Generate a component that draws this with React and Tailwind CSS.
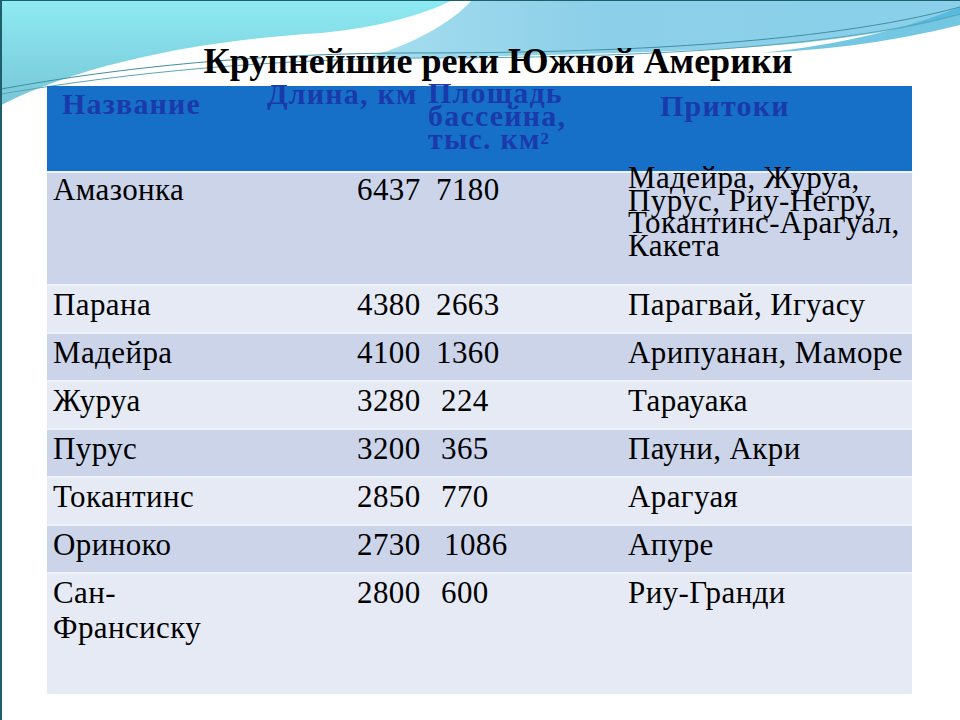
import React from 'react';

function Background() {
  return (
    <svg className="absolute inset-0 w-full h-full" viewBox="0 0 960 720" preserveAspectRatio="none">
      <defs>
        <linearGradient id="cy" x1="0" y1="0" x2="0" y2="1">
          <stop offset="0" stopColor="#8deaf2" />
          <stop offset="1" stopColor="#78c6d8" />
        </linearGradient>
        <linearGradient id="lb" x1="0" y1="0" x2="1" y2="0">
          <stop offset="0" stopColor="#a6def0" />
          <stop offset="0.4" stopColor="#8ccfe8" />
          <stop offset="1" stopColor="#8ad0ea" />
        </linearGradient>
      </defs>
      <path d="M0,0 H450 C420,14 380,26 320,32 C220,38 90,58 0,104 Z" fill="url(#cy)" />
      <path d="M470,0 H960 V14 C900,30 820,44 700,49 C600,53 480,56 360,58 C410,45 450,22 470,0 Z" fill="url(#lb)" />
      <path d="M960,6 C905,28 840,44 760,52 C850,48 910,36 960,24 Z" fill="#45b4d8" opacity="0.75" />
      <path d="M0,88 C120,66 260,52 420,52 C600,52 820,44 960,6" fill="none" stroke="#3f8fa0" strokeWidth="1" />
      <path d="M0,93 C130,71 270,58 430,57 C610,57 830,49 960,13" fill="none" stroke="#5aa6b4" strokeWidth="1" />
    </svg>
  );
}

function Row({ bg, h, name, len, area, areaCls, trib, tribCls, colCls }) {
  return (
    <div className={`grid grid-cols-[304px_79px_192px_1fr] border-t-2 border-[#eef1f8] ${bg} ${h}`}>
      <div className={`pl-[6px] ${colCls}`}>
        {name.map((n) => (
          <div key={n} className="whitespace-nowrap">{n}</div>
        ))}
      </div>
      <div className={`pl-[6px] ${colCls}`}>{len}</div>
      <div className={`${areaCls} ${colCls}`}>{area}</div>
      <div className={`pl-[6px] ${tribCls}`}>
        {trib.map((t) => (
          <div key={t} className="whitespace-nowrap">{t}</div>
        ))}
      </div>
    </div>
  );
}

export default function App() {
  const dark = 'bg-[#ccd4ea]';
  const light = 'bg-[#e6eaf5]';
  return (
    <div className="relative w-[960px] h-[720px] overflow-hidden bg-white border-l-2 border-t border-[#1f5f6c]">
      <Background />
      <div className="relative flex flex-col">
        <div className="flex justify-center pl-[34px] pt-[40px]">
          <h1 className="font-['Liberation_Serif',serif] font-bold text-[36px] leading-[40px] text-black">
            Крупнейшие реки Южной Америки
          </h1>
        </div>
        <div className="ml-[45px] mt-[5px] w-[865px] flex flex-col">
          <div className="grid grid-cols-[220px_161px_232px_1fr] h-[85px] bg-[#1770c8] font-['Liberation_Serif',serif] font-bold text-[30px] leading-[23px] tracking-[1.2px] text-[#1a3aab]">
            <div className="pl-[15px] pt-[6px] whitespace-nowrap">Название</div>
            <div className="mt-[-4px] whitespace-nowrap">Длина, км</div>
            <div className="mt-[-5px]">
              <div>Площадь</div>
              <div>бассейна,</div>
              <div>
                тыс. км<sup className="text-[17px] relative top-[-5px]">2</sup>
              </div>
            </div>
            <div className="pt-[8px] whitespace-nowrap">Притоки</div>
          </div>
          <div className="flex flex-col font-['Liberation_Serif',serif] text-[31px] leading-[35px] tracking-[0.4px] text-black">
            <Row
              bg={dark}
              h="h-[113px]"
              colCls="mt-[-1px]"
              name={['Амазонка']}
              len="6437"
              area="7180"
              areaCls="pl-[6px]"
              trib={['Мадейра, Журуа,', 'Пурус, Риу-Негру,', 'Токантинс-Арагуал,', 'Какета']}
              tribCls="mt-[-6px] leading-[22.5px]"
            />
            <Row bg={light} h="h-[48px]" colCls="pt-[1px]" name={['Парана']} len="4380" area="2663" areaCls="pl-[6px]" trib={['Парагвай, Игуасу']} tribCls="pt-[1px]" />
            <Row bg={dark} h="h-[48px]" colCls="pt-[1px]" name={['Мадейра']} len="4100" area="1360" areaCls="pl-[6px]" trib={['Арипуанан, Маморе']} tribCls="pt-[1px]" />
            <Row bg={light} h="h-[48px]" colCls="pt-[1px]" name={['Журуа']} len="3280" area="224" areaCls="pl-[11px]" trib={['Тарауака']} tribCls="pt-[1px]" />
            <Row bg={dark} h="h-[48px]" colCls="pt-[1px]" name={['Пурус']} len="3200" area="365" areaCls="pl-[11px]" trib={['Пауни, Акри']} tribCls="pt-[1px]" />
            <Row bg={light} h="h-[48px]" colCls="pt-[1px]" name={['Токантинс']} len="2850" area="770" areaCls="pl-[11px]" trib={['Арагуая']} tribCls="pt-[1px]" />
            <Row bg={dark} h="h-[48px]" colCls="pt-[1px]" name={['Ориноко']} len="2730" area="1086" areaCls="pl-[14px]" trib={['Апуре']} tribCls="pt-[1px]" />
            <Row bg={light} h="h-[122px]" colCls="pt-[1px]" name={['Сан-', 'Франсиску']} len="2800" area="600" areaCls="pl-[11px]" trib={['Риу-Гранди']} tribCls="pt-[1px]" />
          </div>
        </div>
      </div>
    </div>
  );
}
